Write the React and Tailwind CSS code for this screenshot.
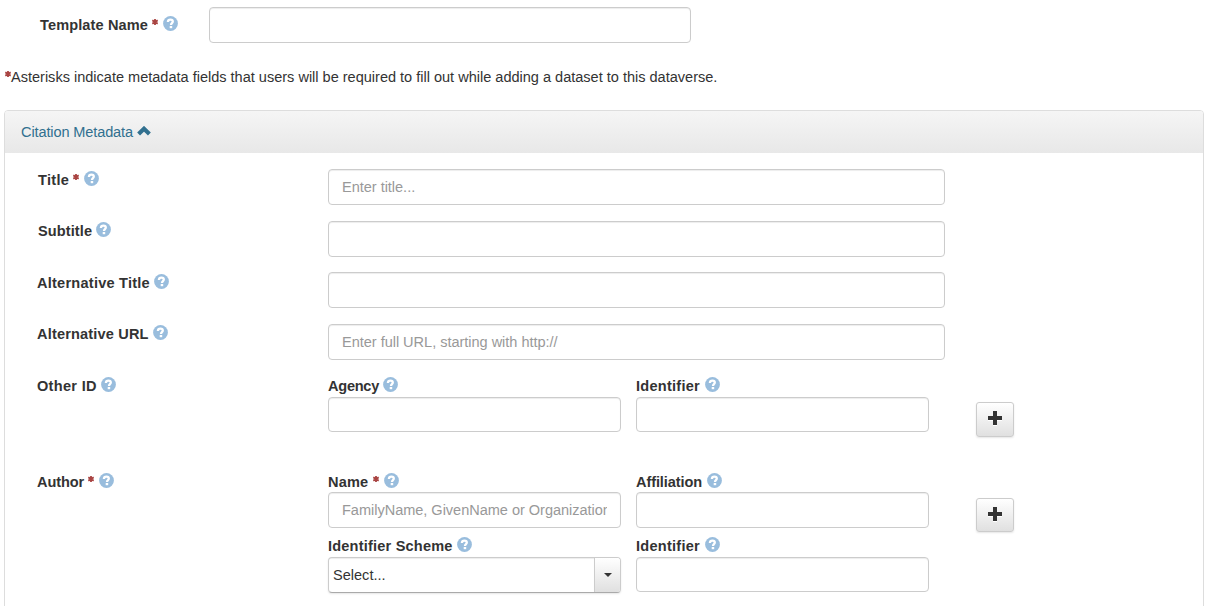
import React from "react";

function Star() {
  return (
    <svg className="mt-[4px] h-[6px] w-[6px] shrink-0" viewBox="0 0 6 6">
      <path d="M3 0V6M0.3 1.3L5.7 4.7M5.7 1.3L0.3 4.7" stroke="#a94442" strokeWidth="1.8" fill="none" />
    </svg>
  );
}

function Help() {
  return (
    <svg className="mt-px h-[15px] w-[15px] shrink-0" viewBox="0 0 15 15">
      <circle cx="7.5" cy="7.5" r="7.4" fill="#99bddd" />
      <path d="M4.9 6C4.9 4.3 6 3.7 7.5 3.7C9 3.7 9.8 4.4 9.8 5.6C9.8 7.2 8 7.1 8 8.9" stroke="#fff" strokeWidth="2.3" fill="none" />
      <rect x="6.7" y="10" width="2.5" height="2.2" fill="#fff" />
    </svg>
  );
}

function Label({ text, width, required }) {
  return (
    <div className="flex h-5 items-start whitespace-nowrap font-bold leading-5">
      <span className={width}>{text}</span>
      {required && <span className="mr-[5px] flex"><Star /></span>}
      <Help />
    </div>
  );
}

function Field({ size, placeholder = "", label }) {
  return (
    <input
      aria-label={label}
      placeholder={placeholder}
      className={`block rounded-[4px] border border-[#ccc] bg-white px-[13px] leading-5 tracking-[-0.03px] shadow-[inset_0_1px_1px_rgba(0,0,0,0.075)] outline-none placeholder:text-[#999] placeholder:opacity-100 ${size}`}
    />
  );
}

function AddButton({ size }) {
  return (
    <button aria-label="Add" className={`flex w-[38px] justify-center rounded-[3px] border border-[#ccc] bg-linear-to-b from-white to-[#e0e0e0] pt-[8px] shadow-[0_1px_2px_rgba(0,0,0,0.1)] ${size}`}>
      <svg className="h-[15px] w-[14px]" viewBox="0 0 14 15">
        <path d="M5 1h4v5h5v4H9v5H5v-5H0V6h5z" fill="#fff" />
        <path d="M5 0h4v5h5v4H9v5H5V9H0V5h5z" fill="#333" />
      </svg>
    </button>
  );
}

function Row({ height, label, children }) {
  return (
    <div className={`flex ${height}`}>
      <div className="w-[291px] shrink-0">{label}</div>
      {children}
    </div>
  );
}

export default function App() {
  return (
    <div className="flex h-[606px] flex-col overflow-hidden bg-white font-['Liberation_Sans',Arial,sans-serif] text-[14.56px] text-[#333]">
      <div className="flex h-[67px] shrink-0 pl-10 pt-[7px]">
        <div className="w-[169px] pt-[8px]"><Label text="Template Name" width="w-[112px] tracking-[0.12px]" required /></div>
        <Field label="Template Name" size="h-[36px] w-[482px]" />
      </div>
      <div className="flex h-[43px] shrink-0 whitespace-nowrap pl-[5px] leading-5">
        <Star />
        <span className="tracking-[-0.01px]">Asterisks indicate metadata fields that users will be required to fill out while adding a dataset to this dataverse.</span>
      </div>
      <section className="mx-1 h-[520px] shrink-0 overflow-hidden rounded-t-[4px] border border-[#ddd]">
        <header className="flex h-[42px] bg-linear-to-b from-[#f5f5f5] to-[#e8e8e8] pl-4 pt-[11px] leading-5 text-[#31708f]">
          <span className="w-[116px] whitespace-nowrap tracking-[-0.12px]">Citation Metadata</span>
          <svg className="mt-[4px] h-[10px] w-[14px]" viewBox="0 0 14 10">
            <path d="M1.6 8L7 2.7L12.4 8" stroke="#31708f" strokeWidth="4.1" fill="none" />
          </svg>
        </header>
        <div className="pl-8 pt-4">
          <Row height="h-[52px]" label={<div className="pt-px"><Label text="Title" width="w-[36px] pl-px tracking-[0.3px]" required /></div>}>
            <Field label="Title" placeholder="Enter title..." size="h-[36px] w-[617px]" />
          </Row>
          <Row height="h-[51px]" label={<Label text="Subtitle" width="w-[59px] pl-px tracking-[0.1px]" />}>
            <Field label="Subtitle" size="h-[36px] w-[617px]" />
          </Row>
          <Row height="h-[52px]" label={<div className="pt-px"><Label text="Alternative Title" width="w-[117px] tracking-[0.24px]" /></div>}>
            <Field label="Alternative Title" size="h-[36px] w-[617px]" />
          </Row>
          <Row height="h-[52px]" label={<Label text="Alternative URL" width="w-[116px] tracking-[0.17px]" />}>
            <Field label="Alternative URL" placeholder="Enter full URL, starting with http://" size="h-[36px] w-[617px]" />
          </Row>
          <Row height="h-[96px]" label={<Label text="Other ID" width="w-[64px] tracking-[0.3px]" />}>
            <div className="w-[308px]">
              <Label text="Agency" width="w-[55px] tracking-[-0.25px]" />
              <div className="pt-px"><Field label="Agency" size="h-[35px] w-[293px]" /></div>
            </div>
            <div className="w-[340px]">
              <Label text="Identifier" width="w-[68.5px] tracking-[0.25px]" />
              <div className="pt-px"><Field label="Identifier" size="h-[35px] w-[293px]" /></div>
            </div>
            <div className="pt-[26px]"><AddButton size="h-[35px]" /></div>
          </Row>
          <Row height="h-[134px]" label={<Label text="Author" width="w-[51px] tracking-[-0.1px]" required />}>
            <div className="w-[308px]">
              <Label text="Name" width="w-[45px] tracking-[0.15px]" required />
              <Field label="Name" placeholder="FamilyName, GivenName or Organization" size="h-[36px] w-[293px]" />
              <div className="pt-[8px]"><Label text="Identifier Scheme" width="w-[129px] tracking-[0.2px]" /></div>
              <div className="mt-px flex h-[36px] w-[293px] overflow-hidden rounded-[4px] border border-[#ccc] border-b-[#aaa] shadow-[0_1px_2px_rgba(0,0,0,0.1)]">
                <span className="flex-1 pl-[4px] pt-[7px] leading-5 shadow-[inset_0_1px_1px_rgba(0,0,0,0.075)]">Select...</span>
                <span className="flex w-[26px] items-center justify-center border-l border-[#ccc] bg-linear-to-b from-white to-[#e0e0e0] pl-px">
                  <svg className="h-[4px] w-[8px]" viewBox="0 0 8 4"><path d="M0 0H8L4 4Z" fill="#333" /></svg>
                </span>
              </div>
            </div>
            <div className="w-[340px]">
              <Label text="Affiliation" width="w-[70.5px] tracking-[-0.1px]" />
              <Field label="Affiliation" size="h-[36px] w-[293px]" />
              <div className="pt-[8px]"><Label text="Identifier" width="w-[68.5px] tracking-[0.25px]" /></div>
              <div className="pt-px"><Field label="Author Identifier" size="h-[35px] w-[293px]" /></div>
            </div>
            <div className="pt-[26px]"><AddButton size="h-[34px]" /></div>
          </Row>
        </div>
      </section>
    </div>
  );
}
